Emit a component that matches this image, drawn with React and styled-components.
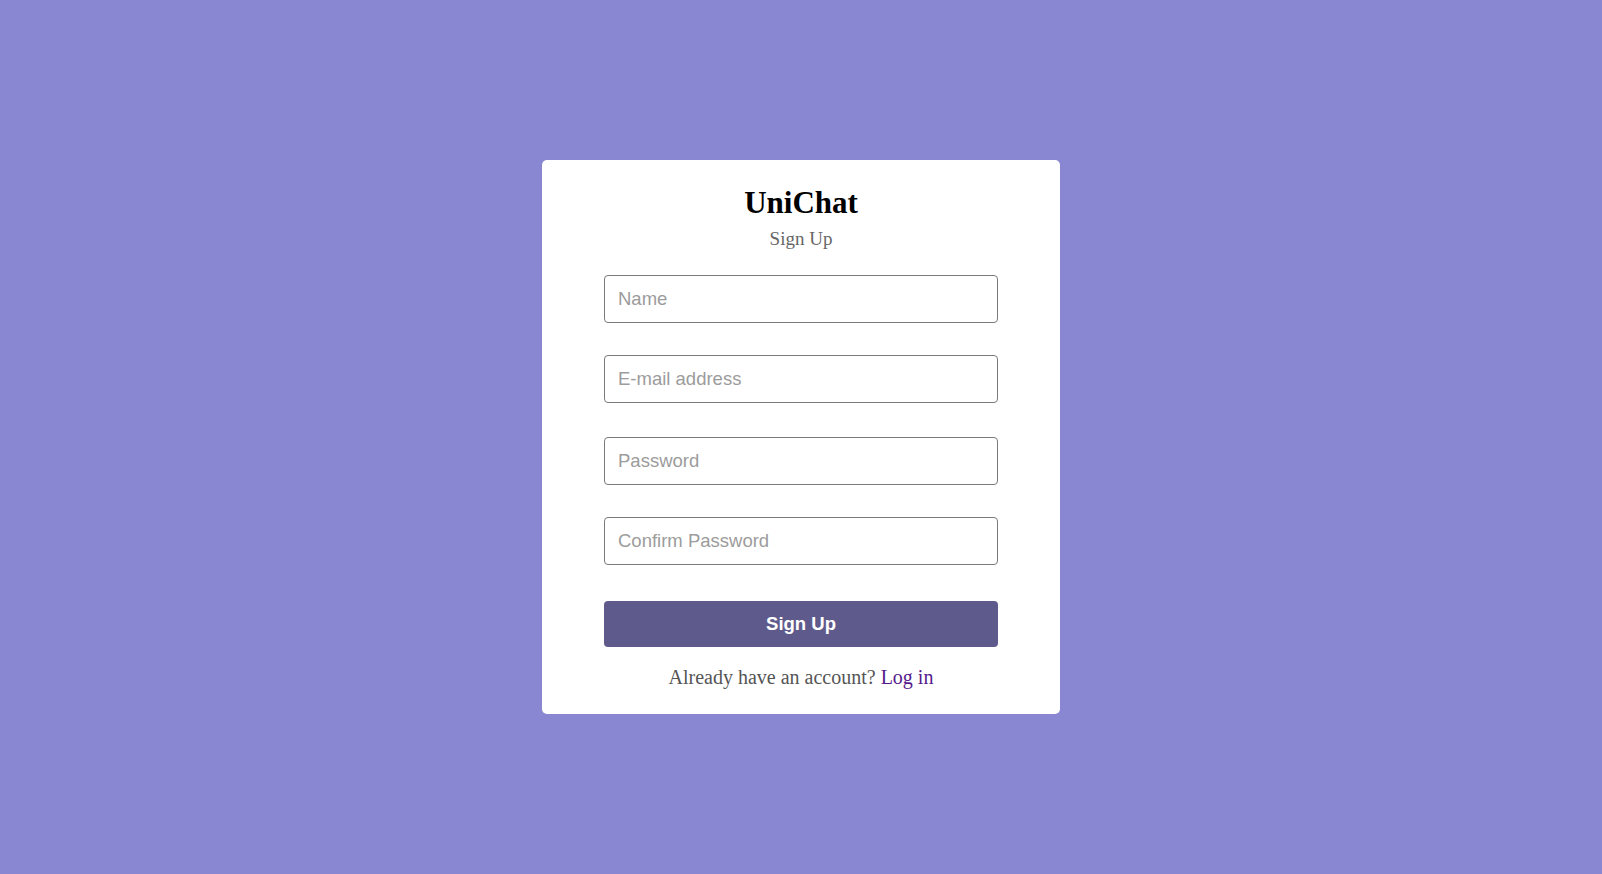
import styled, { createGlobalStyle } from 'styled-components'

const GlobalStyle = createGlobalStyle`
  html, body {
    margin: 0;
    padding: 0;
    background: #8986d2;
  }
  * { box-sizing: border-box; }
`

const Page = styled.div`
  min-height: 100vh;
  display: flex;
  align-items: center;
  justify-content: center;
  font-family: "Liberation Serif", "Times New Roman", serif;
`

const Card = styled.div`
  width: 518px;
  background: #fff;
  border-radius: 5px;
  padding: 25px 62px 25px;
  display: flex;
  flex-direction: column;
  align-items: stretch;
  text-align: center;
`

const Logo = styled.h1`
  margin: 0;
  font-size: 31px;
  line-height: 36px;
  font-weight: 700;
  color: #000;
`

const Subtitle = styled.div`
  margin-top: 7px;
  font-size: 19px;
  line-height: 22px;
  color: #666;
`

const Form = styled.form`
  margin-top: 25px;
  display: flex;
  flex-direction: column;
`

const Input = styled.input`
  display: block;
  width: 100%;
  height: 48px;
  margin-bottom: ${p => p.$gap || 0}px;
  padding: 0 13px;
  border: 1px solid #7a7a7a;
  border-radius: 4px;
  font-family: "Liberation Sans", Arial, sans-serif;
  font-size: 18.5px;
  color: #222;
  outline: none;
  &::placeholder {
    color: #9c9c9c;
  }
`

const Button = styled.button`
  height: 46px;
  width: 100%;
  border: none;
  border-radius: 4px;
  background: #5e5b8c;
  color: #fff;
  font-family: "Liberation Sans", Arial, sans-serif;
  font-weight: 700;
  font-size: 18.5px;
  cursor: pointer;
`

const Footer = styled.p`
  margin: 19px 0 0;
  font-size: 20px;
  line-height: 23px;
  color: #555;
`

const Link = styled.a`
  color: #551a8b;
  text-decoration: none;
`

function App() {
  return (
    <>
      <GlobalStyle />
      <Page>
        <Card>
          <Logo>UniChat</Logo>
          <Subtitle>Sign Up</Subtitle>
          <Form onSubmit={e => e.preventDefault()}>
            <Input type="text" placeholder="Name" $gap={32} />
            <Input type="email" placeholder="E-mail address" $gap={34} />
            <Input type="password" placeholder="Password" $gap={32} />
            <Input type="password" placeholder="Confirm Password" $gap={36} />
            <Button type="submit">Sign Up</Button>
          </Form>
          <Footer>
            Already have an account? <Link href="#">Log in</Link>
          </Footer>
        </Card>
      </Page>
    </>
  )
}

export default App
